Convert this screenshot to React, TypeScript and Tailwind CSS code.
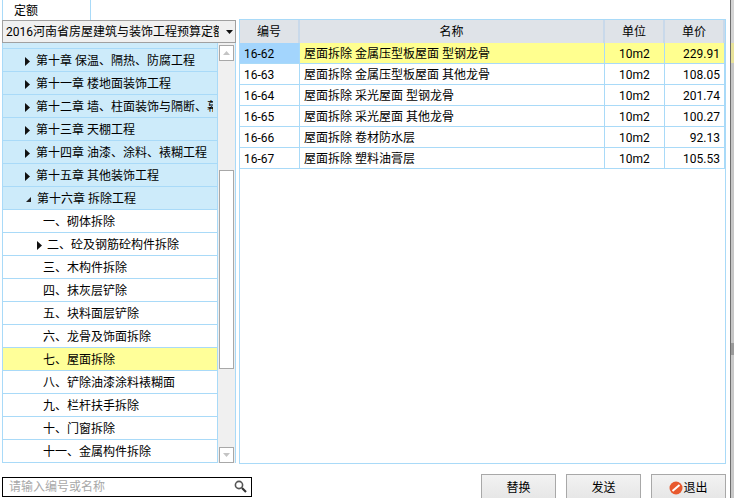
const treeRows = [
  { label: "第十章 保温、隔热、防腐工程", arrow: "right", level: 0 },
  { label: "第十一章 楼地面装饰工程", arrow: "right", level: 0 },
  { label: "第十二章 墙、柱面装饰与隔断、幕墙工程", arrow: "right", level: 0 },
  { label: "第十三章 天棚工程", arrow: "right", level: 0 },
  { label: "第十四章 油漆、涂料、裱糊工程", arrow: "right", level: 0 },
  { label: "第十五章 其他装饰工程", arrow: "right", level: 0 },
  { label: "第十六章 拆除工程", arrow: "down", level: 0 },
  { label: "一、砌体拆除", arrow: "", level: 1 },
  { label: "二、砼及钢筋砼构件拆除", arrow: "right", level: 1 },
  { label: "三、木构件拆除", arrow: "", level: 1 },
  { label: "四、抹灰层铲除", arrow: "", level: 1 },
  { label: "五、块料面层铲除", arrow: "", level: 1 },
  { label: "六、龙骨及饰面拆除", arrow: "", level: 1 },
  { label: "七、屋面拆除", arrow: "", level: 1, selected: true },
  { label: "八、铲除油漆涂料裱糊面", arrow: "", level: 1 },
  { label: "九、栏杆扶手拆除", arrow: "", level: 1 },
  { label: "十、门窗拆除", arrow: "", level: 1 },
  { label: "十一、金属构件拆除", arrow: "", level: 1 },
];

const priceRows = [
  ["16-62", "屋面拆除 金属压型板屋面 型钢龙骨", "10m2", "229.91"],
  ["16-63", "屋面拆除 金属压型板屋面 其他龙骨", "10m2", "108.05"],
  ["16-64", "屋面拆除 采光屋面 型钢龙骨", "10m2", "201.74"],
  ["16-65", "屋面拆除 采光屋面 其他龙骨", "10m2", "100.27"],
  ["16-66", "屋面拆除 卷材防水层", "10m2", "92.13"],
  ["16-67", "屋面拆除 塑料油膏层", "10m2", "105.53"],
];

function Arrow({ dir }: { dir: string }) {
  if (dir === "down") {
    return (
      <svg width="7" height="7" viewBox="0 0 7 7" className="shrink-0">
        <polygon points="6,1 6,6 1,6" fill="#222" />
      </svg>
    );
  }
  return (
    <svg width="5" height="9" viewBox="0 0 5 9" className="shrink-0">
      <polygon points="0,0 5,4.5 0,9" fill="#111" />
    </svg>
  );
}

function TreeRow({ row }: { row: (typeof treeRows)[number] }) {
  const bg = row.selected ? "bg-[#ffff99]" : row.level === 0 ? "bg-[#cdebfa]" : "bg-white";
  return (
    <div className={`h-[23px] flex items-center pt-[2px] border-b border-[#a9daf8] whitespace-nowrap overflow-hidden pr-[4px] ${bg}`}>
      {row.level === 0 ? (
        <div className={`${row.arrow === "down" ? "w-[34px]" : "w-[33px]"} shrink-0 pl-[22px] flex items-center`}>
          <Arrow dir={row.arrow} />
        </div>
      ) : row.arrow ? (
        <div className="w-[44px] shrink-0 pl-[34px] flex items-center">
          <Arrow dir={row.arrow} />
        </div>
      ) : (
        <div className="w-[40px] shrink-0" />
      )}
      <span className="overflow-hidden">{row.label}</span>
    </div>
  );
}

function ScrollButton({ up }: { up?: boolean }) {
  return (
    <div className="ml-[1px] w-[15px] h-[16px] border border-[#a8a8a8] bg-white flex items-center justify-center">
      <svg width="7" height="4" viewBox="0 0 7 4">
        <polygon points={up ? "3.5,0 7,4 0,4" : "0,0 7,0 3.5,4"} fill="#c4c4c4" />
      </svg>
    </div>
  );
}

function Button({ children }: { children: React.ReactNode }) {
  return (
    <button className="w-[75px] h-[30px] shrink-0 border border-[#a8a8a8] bg-gradient-to-b from-[#f2f2f2] to-[#e4e4e4] flex items-start justify-center pt-[5px] text-[12px] text-black">
      {children}
    </button>
  );
}

export default function App() {
  return (
    <div className="w-[734px] h-[498px] overflow-hidden bg-white flex text-[12px] leading-[16px] text-black font-['Roboto','Noto_Sans_CJK_SC',sans-serif]">
      <div className="w-[730px] shrink-0 flex flex-col">
        <div className="h-[463px] flex pl-[2px]">
          {/* Left: tab, dropdown and chapter tree */}
          <div className="w-[234px] flex flex-col border-l border-[#a9daf8]">
            <div className="w-[89px] h-[20px] -ml-[1px] border-x border-[#a9daf8] pl-[11px] pt-[1px] flex items-center">定额</div>
            <div className="h-[23px] -ml-[1px] border border-[#a0a0a0] bg-[#f0f0f0] flex items-center pl-[3px] pt-[1px] whitespace-nowrap">
              <span className="w-[213px] overflow-hidden">2016河南省房屋建筑与装饰工程预算定额</span>
              <svg width="7" height="4" viewBox="0 0 7 4" className="ml-[7px]">
                <polygon points="0,0 7,0 3.5,4" fill="#111" />
              </svg>
            </div>
            <div className="flex-1 flex min-h-0">
              <div className="w-[215px] border-r border-[#a9daf8]">
                <div className="h-[6px] bg-[#cdebfa] border-b border-[#a9daf8]" />
                {treeRows.map((r) => (
                  <TreeRow key={r.label} row={r} />
                ))}
              </div>
              <div className="w-[18px] bg-[#f0f0f0] border-r border-[#a9daf8] pt-[2px]">
                <ScrollButton up />
                <div className="h-[109px]" />
                <div className="ml-[1px] w-[15px] h-[199px] border border-[#a8a8a8] bg-white" />
                <div className="h-[78px]" />
                <ScrollButton />
              </div>
            </div>
          </div>

          {/* Right: price list */}
          <div className="ml-[3px] w-[487px] mt-[19px] h-[445px] border border-[#a9daf8]">
            <div className="h-[23px] grid grid-cols-[60px_305px_60px_60px] bg-[#dfe3e8] text-center">
              {["编号", "名称", "单位", "单价"].map((h) => (
                <div key={h} className="border-r-2 border-[#c9d9ea] flex items-center justify-center">
                  {h}
                </div>
              ))}
            </div>
            {priceRows.map((r, i) => (
              <div key={r[0]} className="h-[21px] grid grid-cols-[60px_305px_60px_60px] whitespace-nowrap">
                <div className={`border-b border-r border-[#a9daf8] flex items-center pt-[1px] pl-[4px] ${i === 0 ? "bg-[#a3d5fd]" : ""}`}>{r[0]}</div>
                <div className={`border-b border-r border-[#a9daf8] flex items-center pt-[1px] pl-[4px] ${i === 0 ? "bg-[#ffff8f]" : ""}`}>{r[1]}</div>
                <div className={`border-b border-r border-[#a9daf8] flex items-center pt-[1px] justify-center ${i === 0 ? "bg-[#ffff8f]" : ""}`}>{r[2]}</div>
                <div className={`border-b border-r border-[#a9daf8] flex items-center pt-[1px] justify-end pr-[4px] ${i === 0 ? "bg-[#ffff8f]" : ""}`}>{r[3]}</div>
              </div>
            ))}
          </div>
        </div>

        {/* Bottom: search and action buttons */}
        <div className="flex-1 flex pl-[2px] overflow-hidden">
          <div className="w-[250px] h-[20px] mt-[14px] border border-black flex items-center pl-[6px] pr-[4px] text-[#a8a8a8]">
            <span className="flex-1">请输入编号或名称</span>
            <svg width="13" height="13" viewBox="0 0 13 13" fill="none" className="-mt-[2px]">
              <circle cx="5" cy="5" r="3.6" stroke="#555" strokeWidth="1.6" />
              <line x1="8" y1="8" x2="12" y2="12" stroke="#333" strokeWidth="2.2" />
            </svg>
          </div>
          <div className="ml-[229px] mt-[11px] flex gap-[10px]">
            <Button>替换</Button>
            <Button>发送</Button>
            <Button>
              <svg width="14" height="14" viewBox="0 0 14 14" className="mt-[1px]">
                <circle cx="7" cy="7" r="6.5" fill="#e8592e" />
                <line x1="3.5" y1="10" x2="10.5" y2="4" stroke="#fff" strokeWidth="2" />
              </svg>
              退出
            </Button>
          </div>
        </div>
      </div>

      {/* Window behind, just visible at the right edge */}
      <div className="flex-1 flex flex-col bg-[#c8c8c8] border-l border-[#6e6e6e]">
        <div className="h-[43px] bg-[#d4d4d4]" />
        <div className="h-[20px] bg-[#e8e29a]" />
        <div className="h-[280px] bg-[#c6c6c6]" />
        <div className="h-[12px] bg-[#9a9a9a]" />
        <div className="flex-1 bg-[#c8c8c8]" />
      </div>
    </div>
  );
}
